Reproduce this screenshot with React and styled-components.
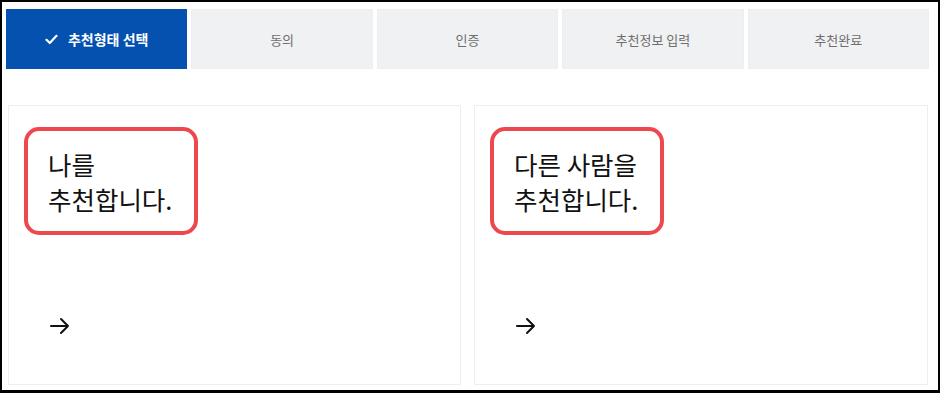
import React from "react";
import styled, { createGlobalStyle } from "styled-components";

const GlobalStyle = createGlobalStyle`
  html, body {
    margin: 0;
    padding: 0;
    background: #ffffff;
  }
  body {
    font-family: "Noto Sans CJK KR", "Noto Sans", sans-serif;
  }
`;

const Frame = styled.div`
  box-sizing: border-box;
  width: 940px;
  height: 393px;
  border: 2px solid #000;
  border-bottom-width: 3px;
  background: #fff;
  overflow: hidden;
`;

const Steps = styled.ul`
  list-style: none;
  margin: 7px 9px 0 4px;
  padding: 0;
  display: grid;
  grid-template-columns: repeat(5, 1fr);
  gap: 4px;
`;

const Step = styled.li`
  height: 60px;
  display: flex;
  align-items: center;
  justify-content: center;
  gap: 10px;
  font-size: ${p => (p.active ? "14px" : "13px")};
  font-weight: ${p => (p.active ? 700 : 400)};
  color: ${p => (p.active ? "#fff" : "#6e6e6e")};
  background: ${p => (p.active ? "#0451b0" : "#f0f1f3")};
  border: 1px solid ${p => (p.active ? "#0451b0" : "#eceef0")};
  box-sizing: border-box;
`;

const Cards = styled.div`
  display: grid;
  grid-template-columns: 453px 454px;
  gap: 13px;
  margin: 36px 0 0 6px;
`;

const Card = styled.button`
  box-sizing: border-box;
  height: 280px;
  padding: 21px 15px 0 15px;
  display: flex;
  flex-direction: column;
  align-items: flex-start;
  background: #fff;
  border: 1px solid #eeeeee;
  cursor: pointer;
  font-family: inherit;
  text-align: left;
`;

const Label = styled.div`
  box-sizing: border-box;
  width: 174px;
  height: 108px;
  border: 4px solid #ec484d;
  border-radius: 15px;
  padding: 15px 0 0 20px;
  font-size: 25.5px;
  line-height: 35px;
  color: #111;
  white-space: nowrap;
`;

const Arrow = styled.span`
  display: block;
  margin: 82px 0 0 26px;
  width: 20px;
  height: 18px;
  color: #111;
`;

const Check = () => (
  <svg width="13" height="11" viewBox="0 0 13 11" fill="none">
    <path d="M1.5 5.8 L4.8 9 L11.5 1.8" stroke="#fff" strokeWidth="2.2" strokeLinecap="round" strokeLinejoin="round" />
  </svg>
);

const ArrowIcon = () => (
  <svg width="20" height="18" viewBox="0 0 20 18" fill="none">
    <path d="M1 9 H18 M11 2 L18 9 L11 16" stroke="currentColor" strokeWidth="2" strokeLinecap="round" strokeLinejoin="round" />
  </svg>
);

const steps = ["추천형태 선택", "동의", "인증", "추천정보 입력", "추천완료"];

const options = [
  ["나를", "추천합니다."],
  ["다른 사람을", "추천합니다."],
];

export default function App() {
  return (
    <>
      <GlobalStyle />
      <Frame>
        <Steps>
          {steps.map((s, i) => (
            <Step key={s} active={i === 0}>
              {i === 0 && <Check />}
              {s}
            </Step>
          ))}
        </Steps>
        <Cards>
          {options.map(([a, b]) => (
            <Card key={a}>
              <Label>
                {a}
                <br />
                {b}
              </Label>
              <Arrow>
                <ArrowIcon />
              </Arrow>
            </Card>
          ))}
        </Cards>
      </Frame>
    </>
  );
}
